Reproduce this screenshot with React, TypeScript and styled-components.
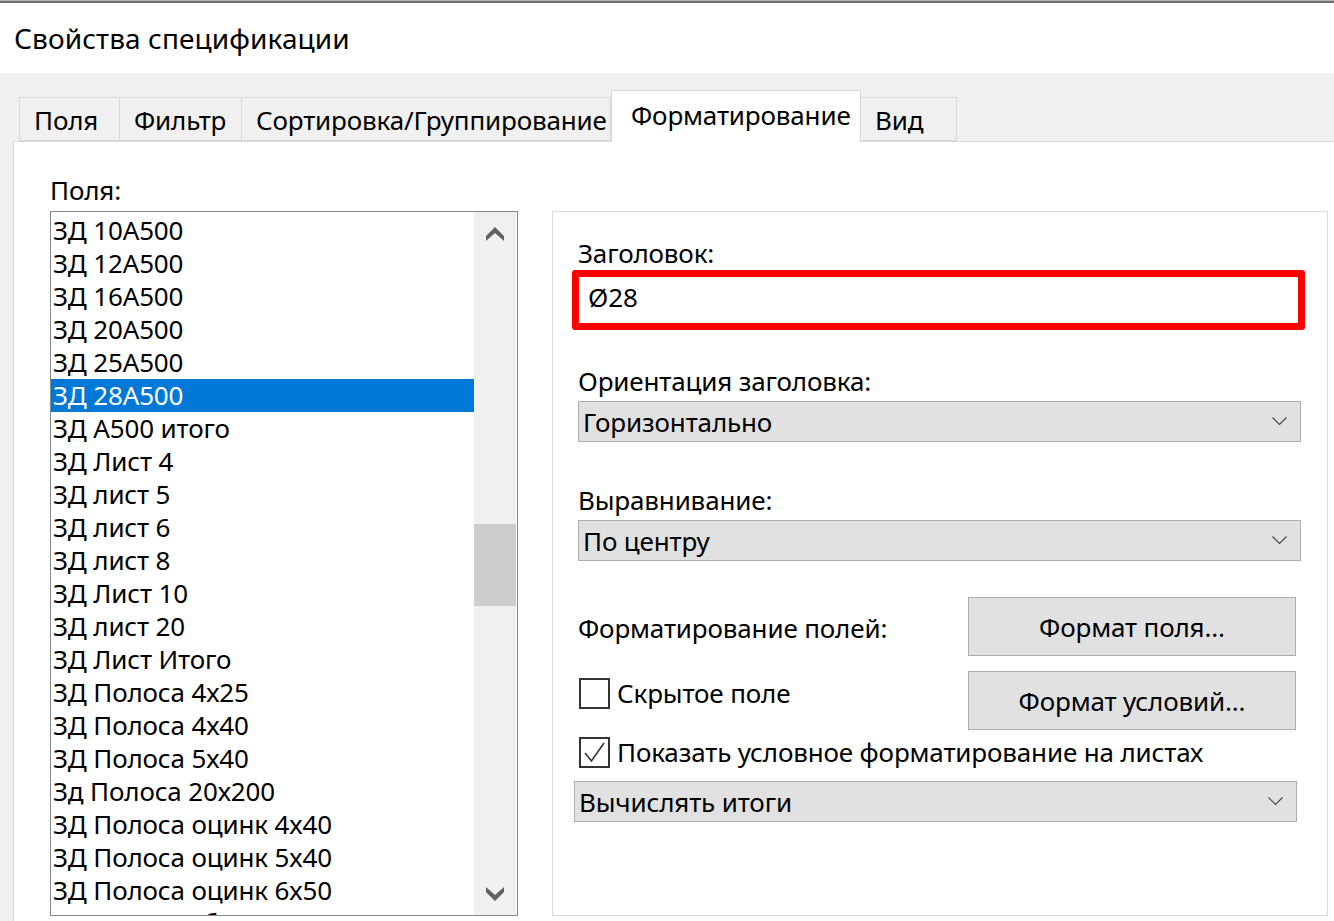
import React, { FunctionComponent } from "react";
import styled, { createGlobalStyle } from "styled-components";

const GlobalStyle = createGlobalStyle`
    html, body {
        margin: 0;
        padding: 0;
        background: #ffffff;
    }
    body {
        font-family: "Noto Sans", "Liberation Sans", sans-serif;
        color: #000;
        letter-spacing: -0.15px;
    }
`;

const Window = styled.div`
    width: 1334px;
    height: 921px;
    overflow: hidden;
    display: flex;
    flex-direction: column;
    background: #ffffff;
`;

const TopEdge = styled.div`
    height: 2px;
    border-top: 1px solid #b4b4b4;
    background: #6f6f6f;
    flex-shrink: 0;
`;

const TitleBar = styled.div`
    height: 70px;
    flex-shrink: 0;
    display: flex;
    align-items: center;
    padding: 0 0 0 14px;
    font-size: 28px;
    letter-spacing: 0.1px;
`;

const Body = styled.div`
    flex: 1;
    min-height: 0;
    background: #f0f0f0;
    padding: 17px 0 0 13px;
    display: flex;
    flex-direction: column;
`;

const TabStrip = styled.div`
    display: flex;
    align-items: flex-end;
    height: 51px;
    padding-left: 6px;
    flex-shrink: 0;
    position: relative;
    z-index: 1;
`;

const Tab = styled.div<{ $width: number; $active?: boolean }>`
    box-sizing: border-box;
    width: ${(p) => p.$width}px;
    height: ${(p) => (p.$active ? 52 : 44)}px;
    margin-bottom: ${(p) => (p.$active ? -1 : 0)}px;
    padding: ${(p) => (p.$active ? "6px 0 0 19px" : "4px 0 0 14px")};
    border: 1px solid #d9d9d9;
    border-bottom: ${(p) => (p.$active ? "none" : "1px solid #d9d9d9")};
    border-left: ${(p) => (p.$active ? "1px solid #d9d9d9" : "none")};
    background: ${(p) => (p.$active ? "#ffffff" : "#f0f0f0")};
    font-size: 26px;
    line-height: 36px;
    white-space: nowrap;
    &:first-child {
        border-left: 1px solid #d9d9d9;
    }
`;

const Panel = styled.div`
    flex: 1;
    min-height: 0;
    background: #ffffff;
    border-top: 1px solid #d9d9d9;
    border-left: 1px solid #d9d9d9;
    padding: 32px 0 0 36px;
    display: grid;
    grid-template-columns: 468px 776px;
    column-gap: 34px;
    align-items: start;
`;

const FieldColumn = styled.div`
    display: flex;
    flex-direction: column;
`;

const Label = styled.div`
    font-size: 26px;
    line-height: 33px;
    white-space: nowrap;
`;

const ListBox = styled.div`
    margin-top: 4px;
    height: 705px;
    box-sizing: border-box;
    border: 1px solid #828790;
    display: flex;
    overflow: hidden;
`;

const ListItems = styled.div`
    flex: 1;
    padding-top: 2px;
    overflow: hidden;
`;

const ListItem = styled.div<{ $selected?: boolean }>`
    height: 33px;
    line-height: 33px;
    padding-left: 2px;
    font-size: 26px;
    white-space: nowrap;
    background: ${(p) => (p.$selected ? "#0078d7" : "transparent")};
    color: ${(p) => (p.$selected ? "#ffffff" : "#000000")};
`;

const ScrollBar = styled.div`
    width: 42px;
    margin-right: 1px;
    background: #f0f0f0;
    display: flex;
    flex-direction: column;
    align-items: stretch;
`;

const ScrollArrow = styled.div`
    height: 42px;
    display: flex;
    align-items: center;
    justify-content: center;
`;

const ScrollTrack = styled.div`
    flex: 1;
    padding-top: 270px;
`;

const ScrollThumb = styled.div`
    height: 82px;
    background: #cdcdcd;
`;

const GroupBox = styled.div`
    margin-top: 37px;
    height: 705px;
    box-sizing: border-box;
    border: 1px solid #dcdcdc;
    padding: 25px 26px 0 25px;
    display: flex;
    flex-direction: column;
`;

const Highlight = styled.div`
    margin: 0 -4px 0 -6px;
    height: 60px;
    box-sizing: border-box;
    border: 7px solid #ff0000;
    border-radius: 3px;
    display: flex;
    align-items: center;
    padding: 0 0 6px 9px;
    font-size: 26px;
`;

const Combo = styled.div<{ $top: number; $shift?: number }>`
    margin-top: ${(p) => p.$top}px;
    margin-left: ${(p) => -(p.$shift || 0)}px;
    margin-right: ${(p) => p.$shift || 0}px;
    height: 41px;
    box-sizing: border-box;
    border: 1px solid #adadad;
    background: #e1e1e1;
    display: flex;
    align-items: center;
    justify-content: space-between;
    padding: 0 13px 0 4px;
    font-size: 26px;
`;

const SectionLabel = styled(Label)<{ $top: number }>`
    margin-top: ${(p) => p.$top}px;
`;

const ActionGrid = styled.div`
    margin-top: 36px;
    display: grid;
    grid-template-columns: 1fr 328px;
    grid-auto-rows: 59px;
    row-gap: 15px;
    padding-right: 5px;
    align-items: center;
`;

const RowLabel = styled(Label)`
    padding-top: 4px;
`;

const Button = styled.div`
    height: 59px;
    box-sizing: border-box;
    border: 1px solid #adadad;
    background: #e1e1e1;
    display: flex;
    align-items: center;
    justify-content: center;
    font-size: 26px;
`;

const CheckRow = styled.div<{ $top?: number }>`
    margin-top: ${(p) => p.$top || 0}px;
    align-self: start;
    display: flex;
    align-items: center;
    gap: 7px;
    font-size: 26px;
    line-height: 33px;
    white-space: nowrap;
`;

const Box = styled.div`
    width: 31px;
    height: 31px;
    box-sizing: border-box;
    border: 2px solid #333333;
    background: #ffffff;
    display: flex;
    align-items: center;
    justify-content: center;
    margin-left: 1px;
`;

const Chevron: FunctionComponent = () => (
    <svg width="15" height="9" viewBox="0 0 15 9">
        <polyline points="0.5,0.5 7.5,7.5 14.5,0.5" fill="none" stroke="#444" strokeWidth="1.1" />
    </svg>
);

const ScrollGlyph: FunctionComponent<{ up?: boolean }> = ({ up }) => (
    <svg width="20" height="17" viewBox="0 0 20 17">
        <path
            d={up ? "M1 11 L10 2 L19 11 L19 16 L10 8 L1 16 Z" : "M1 1 L10 9 L19 1 L19 6 L10 15 L1 6 Z"}
            fill="#606060"
        />
    </svg>
);

const CheckBox: FunctionComponent<{ checked?: boolean; label: string; top?: number }> = ({
    checked,
    label,
    top,
}) => (
    <CheckRow $top={top}>
        <Box>
            {checked && (
                <svg width="25" height="25" viewBox="0 0 25 25">
                    <polyline points="3,13 9.5,21 22,3" fill="none" stroke="#333" strokeWidth="1.6" />
                </svg>
            )}
        </Box>
        {label}
    </CheckRow>
);

const fields = [
    "ЗД 10А500",
    "ЗД 12А500",
    "ЗД 16А500",
    "ЗД 20А500",
    "ЗД 25А500",
    "ЗД 28А500",
    "ЗД А500 итого",
    "ЗД Лист 4",
    "ЗД лист 5",
    "ЗД лист 6",
    "ЗД лист 8",
    "ЗД Лист 10",
    "ЗД лист 20",
    "ЗД Лист Итого",
    "ЗД Полоса 4х25",
    "ЗД Полоса 4х40",
    "ЗД Полоса 5х40",
    "Зд Полоса 20х200",
    "ЗД Полоса оцинк 4х40",
    "ЗД Полоса оцинк 5х40",
    "ЗД Полоса оцинк 6х50",
    "Зд Полоса 6б",
];

const tabs = [
    { title: "Поля", width: 101 },
    { title: "Фильтр", width: 122 },
    { title: "Сортировка/Группирование", width: 369 },
    { title: "Форматирование", width: 250, active: true },
    { title: "Вид", width: 96 },
];

const App: FunctionComponent = () => {
    return (
        <Window>
            <GlobalStyle />
            <TopEdge />
            <TitleBar>Свойства спецификации</TitleBar>
            <Body>
                <TabStrip>
                    {tabs.map((t) => (
                        <Tab key={t.title} $width={t.width} $active={t.active}>
                            {t.title}
                        </Tab>
                    ))}
                </TabStrip>
                <Panel>
                    <FieldColumn>
                        <Label>Поля:</Label>
                        <ListBox>
                            <ListItems>
                                {fields.map((f) => (
                                    <ListItem key={f} $selected={f === "ЗД 28А500"}>
                                        {f}
                                    </ListItem>
                                ))}
                            </ListItems>
                            <ScrollBar>
                                <ScrollArrow>
                                    <ScrollGlyph up />
                                </ScrollArrow>
                                <ScrollTrack>
                                    <ScrollThumb />
                                </ScrollTrack>
                                <ScrollArrow>
                                    <ScrollGlyph />
                                </ScrollArrow>
                            </ScrollBar>
                        </ListBox>
                    </FieldColumn>
                    <GroupBox>
                        <Label>Заголовок:</Label>
                        <Highlight>Ø28</Highlight>
                        <SectionLabel $top={35}>Ориентация заголовка:</SectionLabel>
                        <Combo $top={3}>
                            Горизонтально
                            <Chevron />
                        </Combo>
                        <SectionLabel $top={42}>Выравнивание:</SectionLabel>
                        <Combo $top={3}>
                            По центру
                            <Chevron />
                        </Combo>
                        <ActionGrid>
                            <RowLabel>Форматирование полей:</RowLabel>
                            <Button>Формат поля...</Button>
                            <CheckBox top={6} label="Скрытое поле" />
                            <Button>Формат условий...</Button>
                        </ActionGrid>
                        <CheckBox checked top={6} label="Показать условное форматирование на листах" />
                        <Combo $top={12} $shift={4}>
                            Вычислять итоги
                            <Chevron />
                        </Combo>
                    </GroupBox>
                </Panel>
            </Body>
        </Window>
    );
};

export default App;
